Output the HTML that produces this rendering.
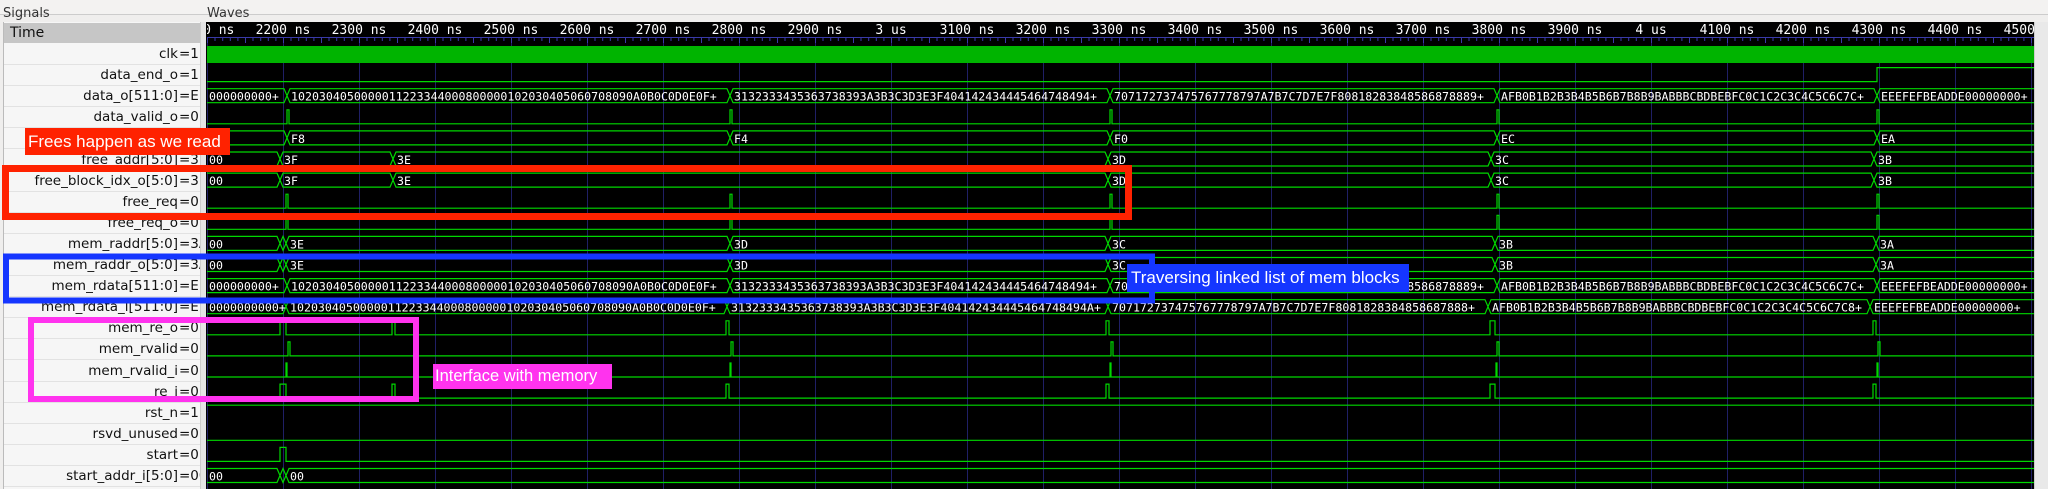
<!DOCTYPE html>
<html><head><meta charset="utf-8"><style>
*{margin:0;padding:0;box-sizing:border-box}
body{width:2048px;height:489px;overflow:hidden;background:#efeeed;position:relative;font-family:"DejaVu Sans","Liberation Sans",sans-serif}
.lbl{position:absolute;font-size:13px;color:#333}
#panel{position:absolute;left:3px;top:22px;width:197px;height:467px;background:#f6f6f6;border-left:1px solid #bbb;overflow:hidden}
#thead{position:absolute;left:0;top:1px;width:197px;height:20px;background:#c6c6c6;font-size:14px;line-height:20px;padding-left:6px;color:#111}
.r{position:absolute;left:0;width:197px;height:21px;border-bottom:1px solid #e2e2e2;font-size:13.5px;line-height:21px;color:#111;white-space:nowrap}
.r .n{position:absolute;right:23px;top:0;text-align:right}
.r .v{position:absolute;left:175px;top:0}
#split{position:absolute;left:200px;top:22px;width:6px;height:467px;background:#e4e4e4;border-left:1px solid #ccc}
#sb{position:absolute;left:2034px;top:22px;width:14px;height:467px;background:#e9e9e9;border-left:1px solid #ccc}
.ann{position:absolute;color:#fff;font-family:"Liberation Sans",sans-serif;white-space:nowrap;overflow:hidden}
</style></head><body>
<div style="position:absolute;left:0;top:0;width:2048px;height:15px;background:#f3f2f1;border-bottom:1px solid #ccc"></div>
<div class="lbl" style="left:3px;top:6px">Signals</div>
<div class="lbl" style="left:207px;top:6px">Waves</div>
<div id="panel">
<div id="thead">Time</div>
<div class="r" style="top:22px"><span class="n">clk</span><span class="v">=1</span></div>
<div class="r" style="top:43.1px"><span class="n">data_end_o</span><span class="v">=1</span></div>
<div class="r" style="top:64.2px"><span class="n">data_o[511:0]</span><span class="v">=EE</span></div>
<div class="r" style="top:85.3px"><span class="n">data_valid_o</span><span class="v">=0</span></div>
<div class="r" style="top:106.4px"><span class="n">free_addr_o[7:0]</span><span class="v">=EA</span></div>
<div class="r" style="top:127.5px"><span class="n">free_addr[5:0]</span><span class="v">=3B</span></div>
<div class="r" style="top:148.6px"><span class="n">free_block_idx_o[5:0]</span><span class="v">=3B</span></div>
<div class="r" style="top:169.7px"><span class="n">free_req</span><span class="v">=0</span></div>
<div class="r" style="top:190.8px"><span class="n">free_req_o</span><span class="v">=0</span></div>
<div class="r" style="top:211.9px"><span class="n">mem_raddr[5:0]</span><span class="v">=3A</span></div>
<div class="r" style="top:233px"><span class="n">mem_raddr_o[5:0]</span><span class="v">=3A</span></div>
<div class="r" style="top:254.1px"><span class="n">mem_rdata[511:0]</span><span class="v">=EE</span></div>
<div class="r" style="top:275.2px"><span class="n">mem_rdata_i[511:0]</span><span class="v">=EE</span></div>
<div class="r" style="top:296.3px"><span class="n">mem_re_o</span><span class="v">=0</span></div>
<div class="r" style="top:317.4px"><span class="n">mem_rvalid</span><span class="v">=0</span></div>
<div class="r" style="top:338.5px"><span class="n">mem_rvalid_i</span><span class="v">=0</span></div>
<div class="r" style="top:359.6px"><span class="n">re_i</span><span class="v">=0</span></div>
<div class="r" style="top:380.7px"><span class="n">rst_n</span><span class="v">=1</span></div>
<div class="r" style="top:401.8px"><span class="n">rsvd_unused</span><span class="v">=0</span></div>
<div class="r" style="top:422.9px"><span class="n">start</span><span class="v">=0</span></div>
<div class="r" style="top:444px"><span class="n">start_addr_i[5:0]</span><span class="v">=00</span></div>
</div>
<div id="split"></div>
<div id="sb"></div>
<svg style="position:absolute;left:0;top:0" width="2048" height="489" viewBox="0 0 2048 489">
<defs><clipPath id="wc"><rect x="207" y="22" width="1827" height="467"/></clipPath></defs>
<rect x="206" y="22" width="1828" height="467" fill="#000"/>
<g clip-path="url(#wc)">
<g stroke="#1f1f66" stroke-width="1">
<path d="M207.5 43V489M283.5 43V489M359.5 43V489M435.5 43V489M511.5 43V489M587.5 43V489M663.5 43V489M739.5 43V489M815.5 43V489M891.5 43V489M967.5 43V489M1043.5 43V489M1119.5 43V489M1195.5 43V489M1271.5 43V489M1347.5 43V489M1423.5 43V489M1499.5 43V489M1575.5 43V489M1651.5 43V489M1727.5 43V489M1803.5 43V489M1879.5 43V489M1955.5 43V489M2031.5 43V489"/>
</g>
<path d="M207 37.5H2034" stroke="#3a3aa8"/>
<path stroke="#3a3aa8" d="M207.5 37V43M215 37V41M222.7 37V41M230.3 37V41M237.9 37V41M245.5 37V43M253 37V41M260.7 37V41M268.3 37V41M275.9 37V41M283.5 37V43M291 37V41M298.7 37V41M306.3 37V41M313.9 37V41M321.5 37V43M329 37V41M336.7 37V41M344.3 37V41M351.9 37V41M359.5 37V43"/>
<g id="ticks">
<path stroke="#3a3aa8" transform="translate(152,0)" d="M207.5 37V43M215 37V41M222.7 37V41M230.3 37V41M237.9 37V41M245.5 37V43M253 37V41M260.7 37V41M268.3 37V41M275.9 37V41M283.5 37V43M291 37V41M298.7 37V41M306.3 37V41M313.9 37V41M321.5 37V43M329 37V41M336.7 37V41M344.3 37V41M351.9 37V41"/>
</g>
<use href="#ticks" x="152"/><use href="#ticks" x="304"/><use href="#ticks" x="456"/><use href="#ticks" x="608"/><use href="#ticks" x="760"/><use href="#ticks" x="912"/><use href="#ticks" x="1064"/><use href="#ticks" x="1216"/><use href="#ticks" x="1368"/><use href="#ticks" x="1520"/><use href="#ticks" x="1672"/>
<g fill="#fff" font-family="DejaVu Sans Mono,Liberation Mono,monospace" font-size="13" text-anchor="middle">
<text x="207" y="34">2100 ns</text><text x="283" y="34">2200 ns</text><text x="359" y="34">2300 ns</text><text x="435" y="34">2400 ns</text><text x="511" y="34">2500 ns</text><text x="587" y="34">2600 ns</text><text x="663" y="34">2700 ns</text><text x="739" y="34">2800 ns</text><text x="815" y="34">2900 ns</text><text x="891" y="34">3 us</text><text x="967" y="34">3100 ns</text><text x="1043" y="34">3200 ns</text><text x="1119" y="34">3300 ns</text><text x="1195" y="34">3400 ns</text><text x="1271" y="34">3500 ns</text><text x="1347" y="34">3600 ns</text><text x="1423" y="34">3700 ns</text><text x="1499" y="34">3800 ns</text><text x="1575" y="34">3900 ns</text><text x="1651" y="34">4 us</text><text x="1727" y="34">4100 ns</text><text x="1803" y="34">4200 ns</text><text x="1879" y="34">4300 ns</text><text x="1955" y="34">4400 ns</text><text x="2031" y="34">4500 ns</text>
</g>
<rect x="207" y="46" width="1827" height="17" fill="#00b400"/>
<g fill="none" stroke="#00d800" stroke-width="1.2" font-family="DejaVu Sans Mono,Liberation Mono,monospace">
<g transform="translate(0,75.6)"><path d="M207 6H1877V-8H2034"/></g>
<g transform="translate(0,96.7)"><path d="M207 -8H284L287 -1L284 6H207M287 -1L290 -8H727L730 -1L727 6H290ZM730 -1L733 -8H1107L1110 -1L1107 6H733ZM1110 -1L1113 -8H1494L1497 -1L1494 6H1113ZM1497 -1L1500 -8H1874L1877 -1L1874 6H1500ZM1877 -1L1880 -8H2034M1877 -1L1880 6H2034"/>
<g fill="#fff" stroke="none" font-size="11.6"><text x="209" y="4">000000000+</text><text x="291" y="4">1020304050000011223344000800000102030405060708090A0B0C0D0E0F+</text><text x="734" y="4">3132333435363738393A3B3C3D3E3F404142434445464748494+</text><text x="1114" y="4">707172737475767778797A7B7C7D7E7F80818283848586878889+</text><text x="1501" y="4">AFB0B1B2B3B4B5B6B7B8B9BABBBCBDBEBFC0C1C2C3C4C5C6C7C+</text><text x="1881" y="4">EEEFEFBEADDE00000000+</text></g></g>
<g transform="translate(0,117.8)"><path d="M207 6H287V-8H289V6H730V-8H732V6H1110V-8H1112V6H1497V-8H1499V6H1877V-8H1879V6H2034"/></g>
<g transform="translate(0,138.9)"><path d="M207 -8H284L287 -1L284 6H207M287 -1L290 -8H727L730 -1L727 6H290ZM730 -1L733 -8H1107L1110 -1L1107 6H733ZM1110 -1L1113 -8H1494L1497 -1L1494 6H1113ZM1497 -1L1500 -8H1874L1877 -1L1874 6H1500ZM1877 -1L1880 -8H2034M1877 -1L1880 6H2034"/>
<g fill="#fff" stroke="none" font-size="11.6"><text x="209" y="4">FC</text><text x="291" y="4">F8</text><text x="734" y="4">F4</text><text x="1114" y="4">F0</text><text x="1501" y="4">EC</text><text x="1881" y="4">EA</text></g></g>
<g transform="translate(0,160)"><path d="M207 -8H277L280 -1L277 6H207M280 -1L283 -8H390L393 -1L390 6H283ZM393 -1L396 -8H1105L1108 -1L1105 6H396ZM1108 -1L1111 -8H1488L1491 -1L1488 6H1111ZM1491 -1L1494 -8H1871L1874 -1L1871 6H1494ZM1874 -1L1877 -8H2034M1874 -1L1877 6H2034"/>
<g fill="#fff" stroke="none" font-size="11.6"><text x="209" y="4">00</text><text x="284" y="4">3F</text><text x="397" y="4">3E</text><text x="1112" y="4">3D</text><text x="1495" y="4">3C</text><text x="1878" y="4">3B</text></g></g>
<g transform="translate(0,181.1)"><path d="M207 -8H277L280 -1L277 6H207M280 -1L283 -8H390L393 -1L390 6H283ZM393 -1L396 -8H1105L1108 -1L1105 6H396ZM1108 -1L1111 -8H1488L1491 -1L1488 6H1111ZM1491 -1L1494 -8H1871L1874 -1L1871 6H1494ZM1874 -1L1877 -8H2034M1874 -1L1877 6H2034"/>
<g fill="#fff" stroke="none" font-size="11.6"><text x="209" y="4">00</text><text x="284" y="4">3F</text><text x="397" y="4">3E</text><text x="1112" y="4">3D</text><text x="1495" y="4">3C</text><text x="1878" y="4">3B</text></g></g>
<g transform="translate(0,202.2)"><path d="M207 6H286V-8H288V6H730V-8H732V6H1110V-8H1112V6H1497V-8H1499V6H1877V-8H1879V6H2034"/></g>
<g transform="translate(0,223.3)"><path d="M207 6H286V-8H288V6H730V-8H732V6H1110V-8H1112V6H1497V-8H1499V6H1877V-8H1879V6H2034"/></g>
<g transform="translate(0,244.4)"><path d="M207 -8H277L280 -1L277 6H207M280 -1L283 -8L286 -1L283 6ZM286 -1L289 -8H727L730 -1L727 6H289ZM730 -1L733 -8H1105L1108 -1L1105 6H733ZM1108 -1L1111 -8H1492L1495 -1L1492 6H1111ZM1495 -1L1498 -8H1873L1876 -1L1873 6H1498ZM1876 -1L1879 -8H2034M1876 -1L1879 6H2034"/>
<g fill="#fff" stroke="none" font-size="11.6"><text x="209" y="4">00</text><text x="290" y="4">3E</text><text x="734" y="4">3D</text><text x="1112" y="4">3C</text><text x="1499" y="4">3B</text><text x="1880" y="4">3A</text></g></g>
<g transform="translate(0,265.5)"><path d="M207 -8H277L280 -1L277 6H207M280 -1L283 -8L286 -1L283 6ZM286 -1L289 -8H727L730 -1L727 6H289ZM730 -1L733 -8H1105L1108 -1L1105 6H733ZM1108 -1L1111 -8H1492L1495 -1L1492 6H1111ZM1495 -1L1498 -8H1873L1876 -1L1873 6H1498ZM1876 -1L1879 -8H2034M1876 -1L1879 6H2034"/>
<g fill="#fff" stroke="none" font-size="11.6"><text x="209" y="4">00</text><text x="290" y="4">3E</text><text x="734" y="4">3D</text><text x="1112" y="4">3C</text><text x="1499" y="4">3B</text><text x="1880" y="4">3A</text></g></g>
<g transform="translate(0,286.6)"><path d="M207 -8H284L287 -1L284 6H207M287 -1L290 -8H727L730 -1L727 6H290ZM730 -1L733 -8H1107L1110 -1L1107 6H733ZM1110 -1L1113 -8H1494L1497 -1L1494 6H1113ZM1497 -1L1500 -8H1874L1877 -1L1874 6H1500ZM1877 -1L1880 -8H2034M1877 -1L1880 6H2034"/>
<g fill="#fff" stroke="none" font-size="11.6"><text x="209" y="4">000000000+</text><text x="291" y="4">1020304050000011223344000800000102030405060708090A0B0C0D0E0F+</text><text x="734" y="4">3132333435363738393A3B3C3D3E3F404142434445464748494+</text><text x="1114" y="4">707172737475767778797A7B7C7D7E7F80818283848586878889+</text><text x="1501" y="4">AFB0B1B2B3B4B5B6B7B8B9BABBBCBDBEBFC0C1C2C3C4C5C6C7C+</text><text x="1881" y="4">EEEFEFBEADDE00000000+</text></g></g>
<g transform="translate(0,307.7)"><path d="M207 -8H283L286 -1L283 6H207M286 -1L289 -8H724L727 -1L724 6H289ZM727 -1L730 -8H1105L1108 -1L1105 6H730ZM1108 -1L1111 -8H1485L1488 -1L1485 6H1111ZM1488 -1L1491 -8H1867L1870 -1L1867 6H1491ZM1870 -1L1873 -8H2034M1870 -1L1873 6H2034"/>
<g fill="#fff" stroke="none" font-size="11.6"><text x="209" y="4">0000000000+</text><text x="290" y="4">1020304050000011223344000800000102030405060708090A0B0C0D0E0F+</text><text x="731" y="4">3132333435363738393A3B3C3D3E3F404142434445464748494A+</text><text x="1112" y="4">707172737475767778797A7B7C7D7E7F8081828384858687888+</text><text x="1492" y="4">AFB0B1B2B3B4B5B6B7B8B9BABBBCBDBEBFC0C1C2C3C4C5C6C7C8+</text><text x="1874" y="4">EEEFEFBEADDE00000000+</text></g></g>
<g transform="translate(0,328.8)"><path d="M207 6H280V-8H286V6H392V-8H395V6H726V-8H729V6H1106V-8H1109V6H1490V-8H1495V6H1873V-8H1876V6H2034"/></g>
<g transform="translate(0,349.9)"><path d="M207 6H288V-8H290V6H731V-8H733V6H1111V-8H1113V6H1497V-8H1499V6H1878V-8H1880V6H2034"/></g>
<g transform="translate(0,371)"><path d="M207 6H286V-8H287V6H730V-8H731V6H1110V-8H1111V6H1496V-8H1497V6H1877V-8H1878V6H2034"/></g>
<g transform="translate(0,392.1)"><path d="M207 6H280V-8H286V6H392V-8H395V6H726V-8H729V6H1106V-8H1109V6H1490V-8H1495V6H1873V-8H1876V6H2034"/></g>
<g transform="translate(0,413.2)"><path d="M207 -8H2034"/></g>
<g transform="translate(0,434.3)"><path d="M207 6H2034"/></g>
<g transform="translate(0,455.4)"><path d="M207 6H280V-8H286V6H2034"/></g>
<g transform="translate(0,476.5)"><path d="M207 -8H277L280 -1L277 6H207M280 -1L283 -8L286 -1L283 6ZM286 -1L289 -8H2034M286 -1L289 6H2034"/>
<g fill="#fff" stroke="none" font-size="11.6"><text x="209" y="4">00</text><text x="290" y="4">00</text></g></g>
</g>
</g>
<rect x="5.5" y="168.5" width="1123" height="48" fill="none" stroke="#ff2200" stroke-width="7"/>
<rect x="6" y="256.5" width="1146" height="44" fill="none" stroke="#1536ff" stroke-width="6"/>
<rect x="31" y="320" width="385" height="79" fill="none" stroke="#ff33ee" stroke-width="6"/>
</svg>
<div class="ann" style="left:25px;top:128px;width:205px;height:27px;background:#ff2200;font-size:17px;line-height:27px;padding-left:3px">Frees happen as we read</div>
<div class="ann" style="left:1127px;top:264px;width:282px;height:28px;background:#1536ff;font-size:17px;line-height:28px;padding-left:4px">Traversing linked list of mem blocks</div>
<div class="ann" style="left:433px;top:364px;width:179px;height:25px;background:#ff33ee;font-size:16.5px;line-height:25px;padding-left:2px">Interface with memory</div>
</body></html>
